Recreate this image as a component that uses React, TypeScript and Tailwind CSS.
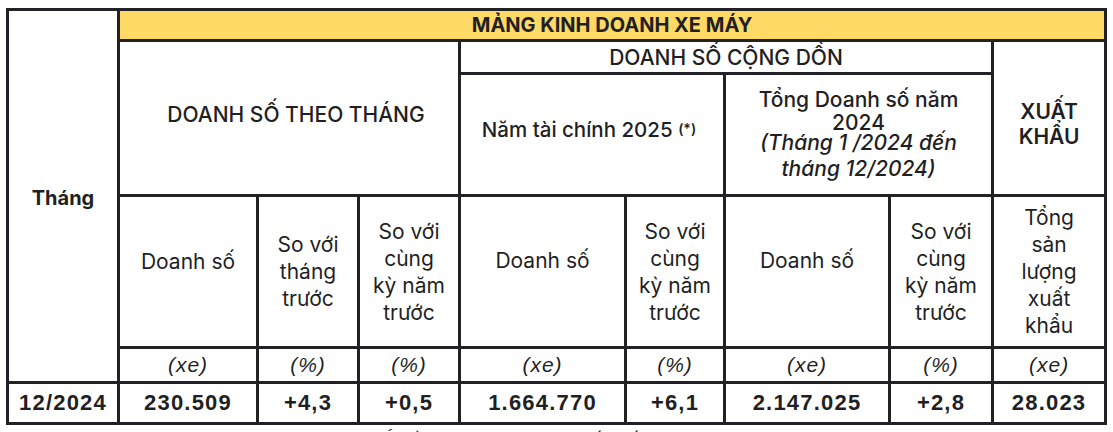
import React from "react";

const B = "border-[3px] border-[#222226]";
const cell = `${B} text-center align-middle p-0`;

export default function App() {
  return (
    <div className="w-[1113px] h-[432px] overflow-hidden bg-white text-[#1f1f24]" style={{ fontFamily: "Inter, 'Liberation Sans', sans-serif" }}>
      <div className="pl-[6px] pt-[8px]">
        <table className="table-fixed border-collapse w-[1101px]">
          <colgroup>
            <col className="w-[111px]" />
            <col className="w-[139px]" />
            <col className="w-[101px]" />
            <col className="w-[101px]" />
            <col className="w-[166px]" />
            <col className="w-[99px]" />
            <col className="w-[165px]" />
            <col className="w-[103px]" />
            <col className="w-[113px]" />
          </colgroup>
          <tbody>
            <tr className="h-[31px]">
              <td rowSpan={5} className={`${cell} text-[20px] font-bold pt-[4px]`}>Tháng</td>
              <td colSpan={8} className={`${cell} bg-[#ffd966] text-[20px] font-bold leading-none`}>MẢNG KINH DOANH XE MÁY</td>
            </tr>
            <tr className="h-[33px]">
              <td colSpan={3} rowSpan={2} className={`${cell} text-[21px] font-medium pb-[6px] pl-[14px]`}>DOANH SỐ THEO THÁNG</td>
              <td colSpan={4} className={`${cell} text-[21px] font-medium leading-none`}>DOANH SỐ CỘNG DỒN</td>
              <td rowSpan={2} className={`${cell} text-[21px] font-semibold leading-[25px] pt-[12px]`}>XUẤT<br />KHẨU</td>
            </tr>
            <tr className="h-[122px]">
              <td colSpan={2} className={`${cell} text-[20.5px] font-medium pb-[8px] pr-[6px]`}>
                Năm tài chính 2025 <sup className="text-[14px] font-semibold relative top-[-3px]">(*)</sup>
              </td>
              <td colSpan={2} className={`${cell} text-[21px] font-medium`}>
                <div className="leading-[23px]">Tổng Doanh số năm<br />2024</div>
                <div className="italic leading-[26px] mt-[-4px]">(Tháng 1 /2024 đến<br />tháng 12/2024)</div>
              </td>
            </tr>
            <tr className="h-[152px] text-[21px] leading-[27px]">
              <td className={`${cell} pb-[20px]`}>Doanh số</td>
              <td className={`${cell}`}>So với<br />tháng<br />trước</td>
              <td className={`${cell}`}>So với<br />cùng<br />kỳ năm<br />trước</td>
              <td className={`${cell} pb-[22px]`}>Doanh số</td>
              <td className={`${cell}`}>So với<br />cùng<br />kỳ năm<br />trước</td>
              <td className={`${cell} pb-[22px]`}>Doanh số</td>
              <td className={`${cell}`}>So với<br />cùng<br />kỳ năm<br />trước</td>
              <td className={`${cell}`}>Tổng<br />sản<br />lượng<br />xuất<br />khẩu</td>
            </tr>
            <tr className="h-[32px] text-[21px] italic tracking-[1px]" style={{ fontFamily: "'Liberation Sans', Arial, sans-serif" }}>
              <td className={cell}>(xe)</td>
              <td className={cell}>(%)</td>
              <td className={cell}>(%)</td>
              <td className={cell}>(xe)</td>
              <td className={cell}>(%)</td>
              <td className={cell}>(xe)</td>
              <td className={cell}>(%)</td>
              <td className={cell}>(xe)</td>
            </tr>
            <tr className="h-[41px] text-[22px] font-bold tracking-[1.2px]" style={{ fontFamily: "'Liberation Sans', Arial, sans-serif" }}>
              <td className={cell}>12/2024</td>
              <td className={cell}>230.509</td>
              <td className={cell}>+4,3</td>
              <td className={cell}>+0,5</td>
              <td className={cell}>1.664.770</td>
              <td className={cell}>+6,1</td>
              <td className={cell}>2.147.025</td>
              <td className={cell}>+2,8</td>
              <td className={cell}>28.023</td>
            </tr>
          </tbody>
        </table>
        <p className="pl-[170px] mt-[2px] text-[19px] italic leading-[24px]" style={{ fontFamily: "'Liberation Sans', Arial, sans-serif" }}>
          (*) Năm tài chính 2025 bắt đầu từ tháng 4/2024 đến hết tháng 3/2025
        </p>
      </div>
    </div>
  );
}
